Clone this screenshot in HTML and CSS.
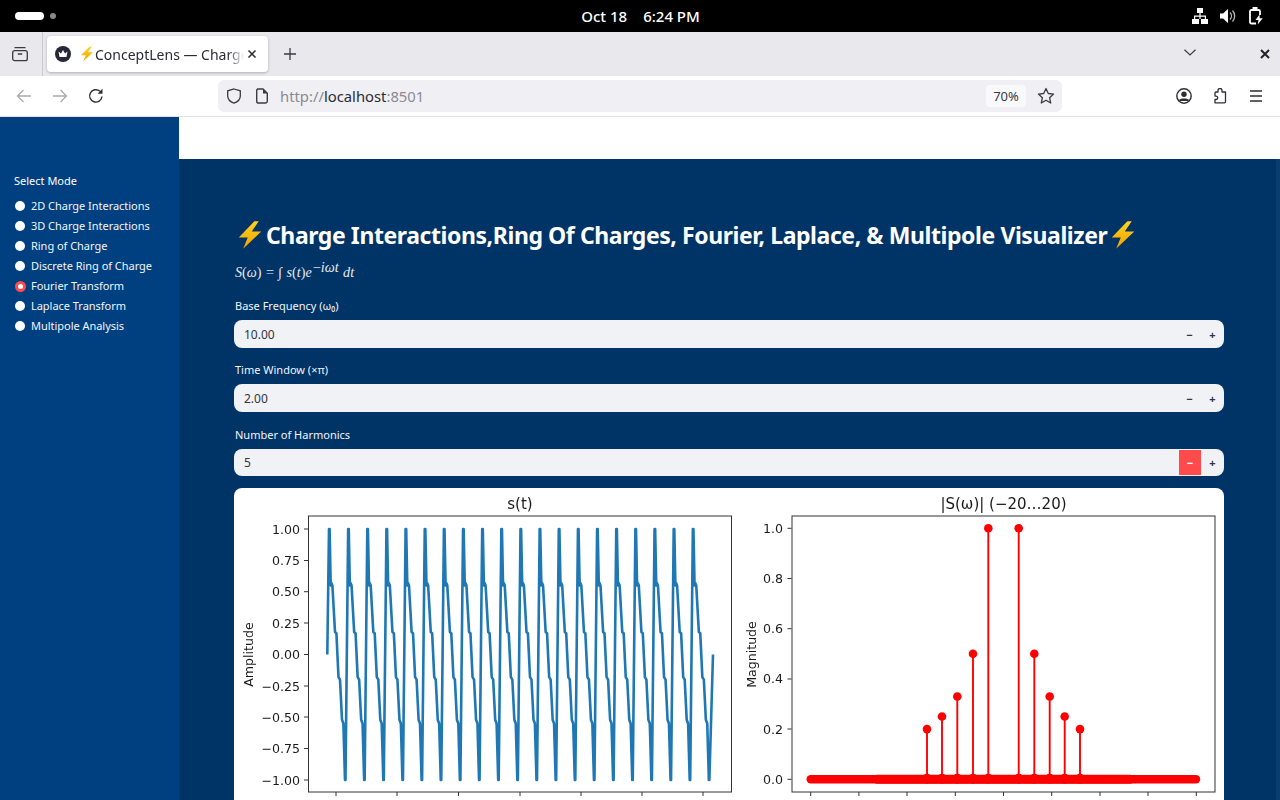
FILE: index.html
```html
<!DOCTYPE html>
<html lang="en">
<head>
<meta charset="utf-8">
<title>ConceptLens — Charge Interactions</title>
<link rel="stylesheet" href="styles.css">
</head>
<body>
<svg class="defs" width="0" height="0" aria-hidden="true">
  <defs>
    <linearGradient id="boltFill" x1="0" y1="0" x2="0" y2="1">
      <stop offset="0" stop-color="#ffd21f"/>
      <stop offset="1" stop-color="#f2a100"/>
    </linearGradient>
    <symbol id="bolt" viewBox="0 0 24 24">
      <path d="M15.5 1 3 14h7.2L6.5 23 21 9.2h-7.6L19 1z" fill="url(#boltFill)"/>
    </symbol>
  </defs>
</svg>

<header class="topbar">
  <div class="activities">
    <span class="pill"></span>
    <span class="dot"></span>
  </div>
  <div class="clock"><span>Oct 18</span><span>6:24 PM</span></div>
  <div class="tray">
    <svg width="16" height="16" viewBox="0 0 16 16" fill="#fff"><path d="M5 0h6v5H5zM7.400 5h1.200v2.500H14V11h-1.200V8.700H8.600V11H7.400V8.700H3.200V11H2V7.500h5.400zM0 11h7v5H0zM9 11h7v5H9z"/></svg>
    <svg width="16" height="16" viewBox="0 0 16 16" fill="#fff"><path d="M0 5.500h3L8 1v14l-5-4.500H0z"/><path d="M10 4.500a5 5 0 0 1 0 7M12.500 2.500a8 8 0 0 1 0 11" fill="none" stroke="#bbb" stroke-width="1.300"/></svg>
    <svg width="16" height="18" viewBox="0 0 16 18" fill="none" stroke="#fff" stroke-width="1.800"><path d="M4.500 1h5M8 16.500H3.500A1.500 1.500 0 0 1 2 15V4.500A1.500 1.500 0 0 1 3.500 3h7A1.500 1.500 0 0 1 12 4.500V8"/><path d="M11.500 7.500 7.500 13h3l-.8 4.500 5-6.300h-3z" fill="#fff" stroke="none"/></svg>
  </div>
</header>

<div class="tabbar">
  <div class="viewbtn">
    <svg width="16" height="16" viewBox="0 0 16 16" fill="none" stroke="#3a3a40" stroke-width="1.300"><rect x=".7" y="4.700" width="14.600" height="10" rx="2"/><path d="M2.500 1.700h11M5.800 8h4.400"/></svg>
  </div>
  <div class="tab">
    <svg class="favicon" width="16" height="16" viewBox="0 0 16 16"><circle cx="8" cy="8" r="8" fill="#262637"/><path d="M3.500 5.500 6 7.500 8 4l2 3.500 2.500-2-1 5.500h-7z" fill="#fff"/></svg>
    <div class="tabtitle"><svg class="bolt-s"><use href="#bolt"/></svg><span>ConceptLens — Charge Interactions</span></div>
    <svg class="tabclose" width="10" height="10" viewBox="0 0 10 10" stroke="#2a2a30" stroke-width="1.500"><path d="M1.500 1.500l7 7M8.500 1.500l-7 7"/></svg>
  </div>
  <svg class="newtab" width="14" height="14" viewBox="0 0 14 14" stroke="#3a3a40" stroke-width="1.300"><path d="M7 1v12M1 7h12"/></svg>
  <svg class="chev" width="12" height="7" viewBox="0 0 12 7" fill="none" stroke="#3a3a40" stroke-width="1.200"><path d="M.5 .8 6 6l5.500-5.200"/></svg>
  <svg class="winclose" width="10" height="10" viewBox="0 0 10 10" stroke="#222" stroke-width="2"><path d="M1 1l8 8M9 1l-8 8"/></svg>
</div>

<nav class="navbar">
  <svg class="navicon" width="16" height="16" viewBox="0 0 16 16" fill="none" stroke="#aaaab0" stroke-width="1.300"><path d="M15 8H1.500M7.500 2l-6 6 6 6"/></svg>
  <svg class="navicon" width="16" height="16" viewBox="0 0 16 16" fill="none" stroke="#aaaab0" stroke-width="1.300"><path d="M1 8h13.500M8.500 2l6 6-6 6"/></svg>
  <svg class="navicon" width="16" height="16" viewBox="0 0 16 16" fill="none" stroke="#2e2e34" stroke-width="1.400"><path d="M14 8.500A6.200 6.200 0 1 1 12 3.300"/><path d="M14.500 .8v5h-5z" fill="#2e2e34" stroke="none"/></svg>
  <div class="urlbar">
    <svg class="shield" width="16" height="16" viewBox="0 0 16 16" fill="none" stroke="#3a3a40" stroke-width="1.300"><path d="M8 1 14.300 2.800V8c0 3.500-3 6-6.300 7.200C4.700 14 1.700 11.500 1.700 8V2.800z"/></svg>
    <svg class="docicon" width="14" height="16" viewBox="0 0 14 16" fill="none" stroke="#3a3a40" stroke-width="1.400"><path d="M2.700 1h5.300l4.300 4.300v8a1.700 1.700 0 0 1-1.700 1.700h-7.900a1.700 1.700 0 0 1-1-1.700V2.700A1.700 1.700 0 0 1 2.700 1z"/><path d="M8 1.200v4.300h4.200" fill="#3a3a40" stroke="none"/></svg>
    <div class="url"><span class="muted">http://</span>localhost<span class="muted">:8501</span></div>
    <div class="zoom">70%</div>
    <svg class="star" width="18" height="18" viewBox="0 0 18 18" fill="none" stroke="#3a3a40" stroke-width="1.300" stroke-linejoin="round"><path d="M9 1.500l2.300 5 5.300.6-4 3.600 1.100 5.300L9 13.300 4.300 16l1.100-5.300-4-3.600 5.300-.6z"/></svg>
  </div>
  <div class="navright">
    <svg width="16" height="16" viewBox="0 0 16 16"><circle cx="8" cy="8" r="7.200" fill="none" stroke="#2e2e34" stroke-width="1.400"/><circle cx="8" cy="6.300" r="2.700" fill="#2e2e34"/><path d="M3.300 11.500C5 10 11 10 12.700 11.500v1.500H3.300z" fill="#2e2e34"/></svg>
    <svg width="16" height="16" viewBox="0 0 16 16" fill="none" stroke="#2e2e34" stroke-width="1.300" stroke-linejoin="round"><path d="M6 2.500a2 2 0 0 1 4 0V4h3.500v9.800a1 1 0 0 1-1 1H3v-3.300h1a1.700 1.700 0 0 0 0-3.400H3V5a1 1 0 0 1 1-1h2z"/></svg>
    <svg width="16" height="16" viewBox="0 0 16 16" stroke="#2e2e34" stroke-width="1.300"><path d="M2 3h12M2 8h12M2 13h12"/></svg>
  </div>
</nav>

<div class="app">
  <aside class="sidebar">
    <div class="side-title">Select Mode</div>
    <ul class="modes">
      <li class="mode"><span class="radio"></span>2D Charge Interactions</li>
      <li class="mode"><span class="radio"></span>3D Charge Interactions</li>
      <li class="mode"><span class="radio"></span>Ring of Charge</li>
      <li class="mode"><span class="radio"></span>Discrete Ring of Charge</li>
      <li class="mode"><span class="radio radio-on"></span>Fourier Transform</li>
      <li class="mode"><span class="radio"></span>Laplace Transform</li>
      <li class="mode"><span class="radio"></span>Multipole Analysis</li>
    </ul>
  </aside>
  <main class="main">
    <div class="app-header"></div>
    <div class="body-row">
      <div class="content">
        <h1 class="title"><svg class="bolt-l"><use href="#bolt"/></svg><span>Charge Interactions,Ring Of Charges, Fourier, Laplace, &amp; Multipole Visualizer</span><svg class="bolt-l"><use href="#bolt"/></svg></h1>
        <p class="formula"><i>S</i>(<i>ω</i>) = <span class="int">∫</span> <i>s</i>(<i>t</i>)<i>e</i><sup>−<i>iωt</i></sup> <i>dt</i></p>
        <div class="field field-first">
          <label class="label">Base Frequency (ω₀)</label>
          <div class="input"><span class="value">10.00</span><span class="step">−</span><span class="step">+</span></div>
        </div>
        <div class="field">
          <label class="label">Time Window (×π)</label>
          <div class="input"><span class="value">2.00</span><span class="step">−</span><span class="step">+</span></div>
        </div>
        <div class="field field-last">
          <label class="label">Number of Harmonics</label>
          <div class="input input-short"><span class="value">5</span><span class="step step-active">−</span><span class="step">+</span></div>
        </div>
        <div class="card">
          <svg class="plot" viewBox="234 488 990 320" width="990" height="320">
            <g class="plot-text">
              <text class="plot-title" x="520" y="509">s(t)</text>
              <text class="plot-title" x="1003.500" y="509">|S(ω)| (−20…20)</text>
              <g class="ylab">
                <text x="300" y="533.500">1.00</text><text x="300" y="565">0.75</text><text x="300" y="596.200">0.50</text>
                <text x="300" y="627.500">0.25</text><text x="300" y="659">0.00</text><text x="300" y="690.500">−0.25</text>
                <text x="300" y="721.500">−0.50</text><text x="300" y="753">−0.75</text><text x="300" y="784.500">−1.00</text>
                <text x="783" y="533">1.0</text><text x="783" y="583">0.8</text><text x="783" y="633.300">0.6</text>
                <text x="783" y="683.300">0.4</text><text x="783" y="733.600">0.2</text><text x="783" y="784">0.0</text>
              </g>
              <text class="axis-name" transform="translate(253 654.500) rotate(-90)">Amplitude</text>
              <text class="axis-name" transform="translate(756 654.500) rotate(-90)">Magnitude</text>
            </g>
            <path id="wave" class="wave"/>
            <g id="spectrum" class="spectrum"></g>
            <path class="ticks" d="M304 529h4M304 560.500h4M304 591.700h4M304 623h4M304 654.500h4M304 686h4M304 717h4M304 748.500h4M304 780h4M336 792v4M397 792v4M458.500 792v4M520 792v4M581 792v4M642 792v4M703 792v4"/>
            <path class="ticks" d="M787.500 528.300h4M787.500 578.500h4M787.500 628.700h4M787.500 679h4M787.500 729h4M787.500 779.300h4M810.700 792v4M858.900 792v4M907 792v4M955.300 792v4M1003.500 792v4M1051.700 792v4M1100 792v4M1148 792v4M1196.300 792v4"/>
            <rect class="frame" x="308.500" y="516" width="423" height="276"/>
            <rect class="frame" x="792" y="516" width="423" height="276"/>
          </svg>
        </div>
      </div>
      <div class="scrolltrack"></div>
    </div>
  </main>
</div>
<script src="script.js"></script>
</body>
</html>
```
FILE: styles.css
```css
* { box-sizing: border-box; }
html, body { margin: 0; height: 800px; overflow: hidden; }
body {
  font-family: "Noto Sans", "Liberation Sans", sans-serif;
  display: flex;
  flex-direction: column;
  background: #fff;
}
.defs { position: absolute; }

/* system bar */
.topbar {
  height: 32px;
  flex: none;
  background: #000;
  display: grid;
  grid-template-columns: 1fr auto 1fr;
  align-items: center;
  padding: 0 16px 0 15px;
  color: #fff;
}
.activities { display: flex; align-items: center; gap: 6px; }
.pill { width: 29px; height: 8px; border-radius: 4px; background: #fff; }
.dot { width: 6px; height: 6px; border-radius: 50%; background: #8a8a8a; }
.clock { display: flex; gap: 16px; font-size: 15px; font-weight: 500; margin-left: 2px; }
.tray { display: flex; justify-content: flex-end; align-items: center; gap: 12px; }

/* tab strip */
.tabbar {
  height: 44px;
  flex: none;
  background: #e9e9ed;
  display: flex;
  align-items: center;
}
.viewbtn {
  width: 43px;
  height: 44px;
  flex: none;
  border-right: 1px solid #c9c9ce;
  display: flex;
  align-items: center;
  padding-left: 12px;
}
.tab {
  margin-left: 4px;
  width: 221px;
  height: 36px;
  background: #fff;
  border-radius: 4px;
  box-shadow: 0 1px 3px rgba(0, 0, 0, .25);
  display: flex;
  align-items: center;
  padding: 0 11px 0 8px;
  flex: none;
}
.favicon { flex: none; }
.tabtitle {
  width: 166px;
  margin-left: 8px;
  display: flex;
  align-items: center;
  font-size: 14px;
  color: #2b2b33;
  white-space: nowrap;
  overflow: hidden;
  -webkit-mask-image: linear-gradient(to right, #000 90%, transparent 100%);
  mask-image: linear-gradient(to right, #000 90%, transparent 100%);
}
.bolt-s { width: 16px; height: 16px; flex: none; }
.tabclose { margin-left: 3px; flex: none; }
.newtab { margin-left: 15px; flex: none; }
.chev { margin-left: auto; margin-right: 64px; margin-top: -3px; flex: none; }
.winclose { margin-right: 10px; flex: none; }

/* nav bar */
.navbar {
  height: 41px;
  flex: none;
  background: #fff;
  border-bottom: 1px solid #e0e0e6;
  display: flex;
  align-items: center;
  padding-left: 16px;
  padding-bottom: 1px;
}
.navicon { margin-right: 20px; flex: none; }
.urlbar {
  margin-left: 94px;
  width: 844px;
  height: 32px;
  background: #f0f0f4;
  border-radius: 6px;
  display: flex;
  align-items: center;
  padding: 0 7px 0 8px;
  flex: none;
}
.docicon { margin-left: 13px; }
.url { margin-left: 11px; font-size: 14.800px; color: #2b2b33; }
.muted { color: #8a8a92; }
.zoom {
  margin-left: auto;
  width: 40px;
  height: 22px;
  border-radius: 4px;
  background: #f9f9fb;
  font-size: 13px;
  color: #3a3a40;
  display: flex;
  align-items: center;
  justify-content: center;
}
.star { margin-left: 11px; }
.navright { margin-left: 114px; display: flex; gap: 20px; }

/* app */
.app { flex: 1; min-height: 0; display: flex; }
.sidebar {
  width: 179px;
  flex: none;
  background: #004080;
  color: #fff;
  padding: 56px 0 0 14px;
  font-size: 11px;
  line-height: 16px;
}
.side-title { margin-bottom: 9px; }
.modes { list-style: none; margin: 0; padding: 0; display: flex; flex-direction: column; gap: 4px; }
.mode { display: flex; align-items: center; height: 16px; color: #f2f5fa; white-space: nowrap; letter-spacing: -.03px; }
.radio { width: 10px; height: 10px; border-radius: 50%; background: #fff; flex: none; margin: -1px 6px 0 1px; }
.radio-on {
  width: 11px;
  height: 11px;
  margin: 0 5.500px 0 .5px;
  background: #fff;
  border: 3.500px solid #ff4b4b;
}

.main { flex: 1; min-width: 0; display: flex; flex-direction: column; }
.app-header { height: 42px; flex: none; background: #fff; }
.body-row { flex: 1; min-height: 0; display: flex; background: #003366; overflow: hidden; }
.content { flex: 1; min-width: 0; padding: 57px 52px 0 55px; }
.scrolltrack { width: 4px; flex: none; background: #0b3d6f; }

.title {
  margin: 0;
  height: 37px;
  display: flex;
  align-items: center;
  font-size: 23px;
  font-weight: 700;
  color: #fff;
  white-space: nowrap;
  letter-spacing: -.42px;
}
.bolt-l { width: 32px; height: 30px; flex: none; }
.formula {
  margin: 7px 0 0 1px;
  height: 24px;
  font-family: "Liberation Serif", serif;
  font-size: 14.200px;
  line-height: 24px;
  color: #e6eaf0;
  word-spacing: .8px;
}
.formula sup { font-size: 14.200px; line-height: 0; vertical-align: 5px; margin-left: 1px; }
.int { font-style: italic; }

.field { margin-bottom: 13px; }
.field-first { margin-top: 13px; }
.field-last { margin-bottom: 12px; margin-top: 14px; }
.label { display: block; height: 18px; font-size: 11px; line-height: 18px; color: #f2f5fa; margin: 0 0 5px 1px; }
.input {
  height: 28px;
  background: #f0f2f6;
  border-radius: 8px;
  display: flex;
  align-items: center;
  padding-left: 10px;
  font-size: 12px;
  color: #31333f;
  overflow: hidden;
}
.input-short { height: 27px; }
.value { flex: 1; }
.step {
  width: 23px;
  height: 25px;
  display: flex;
  align-items: center;
  justify-content: center;
  font-weight: 700;
  font-size: 11px;
  color: #31333f;
}
.step-active { width: 22px; margin-left: 1px; background: #ff4b4b; color: #fff; }

.card {
  height: 320px;
  background: #fff;
  border-radius: 8px 8px 0 0;
  overflow: hidden;
}
.plot { display: block; filter: blur(.25px); }
.plot-text text { font-family: "DejaVu Sans", sans-serif; fill: #1a1a1a; }
.plot-title { font-size: 15px; text-anchor: middle; }
.ylab text { font-size: 12.600px; text-anchor: end; }
.axis-name { font-size: 12.600px; text-anchor: middle; }
.wave { fill: none; stroke: #1f77b4; stroke-width: 2.600; stroke-linejoin: round; }
.spectrum line { stroke: #f00; stroke-width: 1.900; }
.spectrum circle { fill: #f00; }
.spectrum .base { stroke-width: 8.400; stroke-linecap: round; }
.spectrum .base-mid { stroke-width: 8.900; }
.ticks { stroke: #333; stroke-width: 1; fill: none; }
.frame { fill: none; stroke: #333; stroke-width: 1; }
```
FILE: script.js
```js
// Draws the two matplotlib traces from their data.
(function () {
  var NS = 'http://www.w3.org/2000/svg';

  // s(t): one period of the harmonic sum, as [px after the peak, amplitude].
  var period = [[0, 1], [.6, 1], [1.7, .55], [2.4, .57], [3.4, .55], [6, .18], [7.4, .17],
    [9.5, -.18], [11, -.2], [13, -.52], [14.4, -.55], [16, -1], [16.5, -1]];
  var sy = function (v) { return 654.5 - v * 125.5; };
  var d = 'M327.3 ' + sy(0);
  for (var k = 0; k < 20; k++) {
    var x0 = 329 + k * 19.15;
    period.forEach(function (p) {
      d += 'L' + (x0 + p[0]).toFixed(2) + ' ' + sy(p[1]).toFixed(2);
    });
  }
  d += 'L713 ' + sy(0);
  document.getElementById('wave').setAttribute('d', d);

  // |S(w)|: markers on the baseline with stems at the harmonics.
  var g = document.getElementById('spectrum');
  var baseY = 779.3;
  var my = function (v) { return baseY - v * 251; };
  function add(tag, attrs) {
    var el = document.createElementNS(NS, tag);
    for (var a in attrs) el.setAttribute(a, attrs[a]);
    g.appendChild(el);
  }
  add('line', { 'class': 'base', x1: 810.7, y1: baseY, x2: 1196, y2: baseY });
  add('line', { 'class': 'base base-mid', x1: 877, y1: baseY, x2: 1130, y2: baseY });
  var stems = [[927, .2], [942, .25], [957.3, .33], [973, .5], [988.3, 1],
    [1018.7, 1], [1034.3, .5], [1049.7, .33], [1064.7, .25], [1080, .2]];
  stems.forEach(function (s) {
    add('line', { x1: s[0], y1: baseY, x2: s[0], y2: my(s[1]) });
    add('circle', { cx: s[0], cy: my(s[1]), r: 4.3 });
    add('circle', { cx: s[0], cy: baseY - .6, r: 5 });
  });
})();
```
